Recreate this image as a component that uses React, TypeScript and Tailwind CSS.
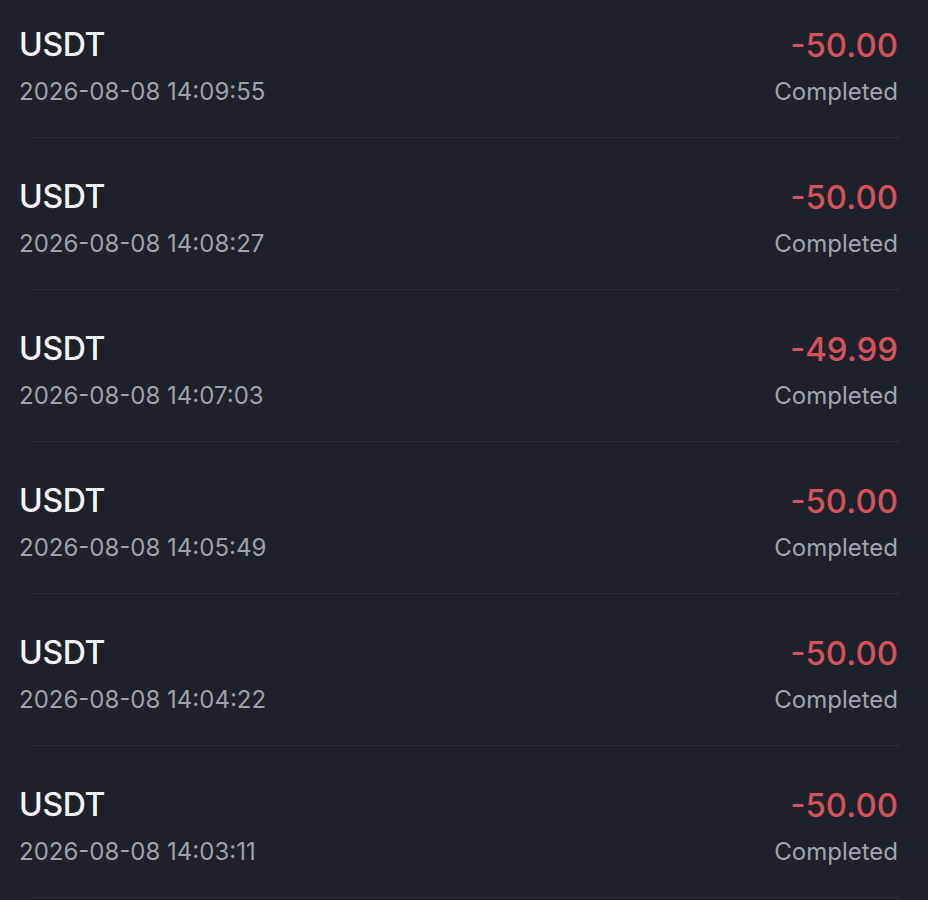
import React from 'react'

type Record = {
  coin: string
  time: string
  amount: string
  status: string
}

const records: Record[] = [
  { coin: 'USDT', time: '2026-08-08 14:09:55', amount: '-50.00', status: 'Completed' },
  { coin: 'USDT', time: '2026-08-08 14:08:27', amount: '-50.00', status: 'Completed' },
  { coin: 'USDT', time: '2026-08-08 14:07:03', amount: '-49.99', status: 'Completed' },
  { coin: 'USDT', time: '2026-08-08 14:05:49', amount: '-50.00', status: 'Completed' },
  { coin: 'USDT', time: '2026-08-08 14:04:22', amount: '-50.00', status: 'Completed' },
  { coin: 'USDT', time: '2026-08-08 14:03:11', amount: '-50.00', status: 'Completed' },
]

const App = () => {
  return (
    <div className="w-[928px] h-[900px] overflow-hidden bg-[#1d212a] font-['Inter',sans-serif]">
      {records.map((r, i) => (
        <div key={i} className="flex flex-col">
          <div className={`flex justify-between pl-[19px] pr-[30px] pb-[29px] ${i === 0 ? 'pt-[24px]' : 'pt-[38px]'}`}>
            {/* left side */}
            <div className="flex flex-col">
              <span className="text-[32px] leading-[42px] font-medium text-[#f3f4f6] tracking-[-0.3px]">
                {r.coin}
              </span>
              <span className="mt-[10px] text-[24px] leading-[32px] text-[#9ea2aa]">
                {r.time}
              </span>
            </div>
            {/* right side */}
            <div className="flex flex-col items-end">
              <span className="text-[33px] leading-[42px] font-medium text-[#d4525c]">
                {r.amount}
              </span>
              <span className="mt-[10px] text-[24px] leading-[32px] text-[#a1a5ad]">
                {r.status}
              </span>
            </div>
          </div>
          <div className="h-px ml-[30px] mr-[28px] bg-[#2b2f38]"></div>
        </div>
      ))}
    </div>
  )
}

export default App
